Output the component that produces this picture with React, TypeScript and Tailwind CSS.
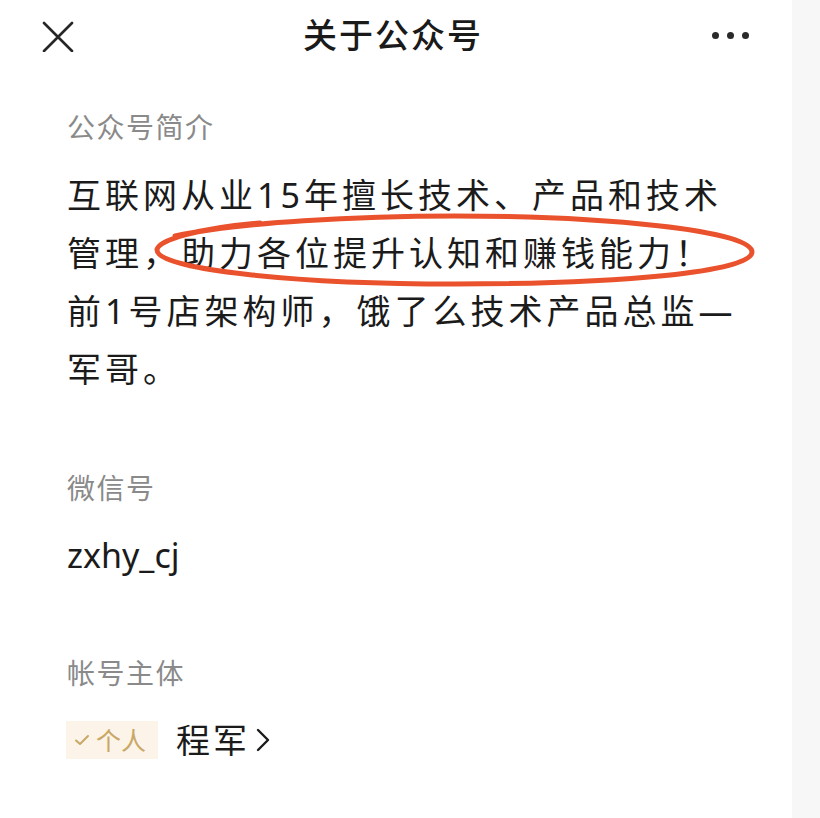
import React from "react";

const font = { fontFamily: '"Noto Sans", "Noto Sans CJK SC", sans-serif' };

const App = () => {
  return (
    <div className="flex w-[820px] h-[818px] bg-white overflow-hidden" style={font}>
      <div className="relative w-[792px] h-full bg-white">
        {/* header */}
        <div className="flex items-center justify-between h-[70px] pl-[42px] pr-[42px]">
          <svg width="32" height="32" viewBox="0 0 32 32" className="mt-[1px]">
            <path d="M2 3 L30 31 M30 3 L2 31" stroke="#262626" strokeWidth="2.6" strokeLinecap="round" />
          </svg>
          <div className="text-[34px] font-medium tracking-[2px] text-[#1a1a1a] leading-none">关于公众号</div>
          <div className="flex items-center gap-[8px] w-[38px]">
            <span className="w-[7px] h-[7px] rounded-full bg-[#2a2a2a]" />
            <span className="w-[7px] h-[7px] rounded-full bg-[#2a2a2a]" />
            <span className="w-[7px] h-[7px] rounded-full bg-[#2a2a2a]" />
          </div>
        </div>

        <div className="pl-[67px]">
          <div className="mt-[37px] h-[40px] leading-[40px] text-[28px] tracking-[1.5px] text-[#8a8a8a]">公众号简介</div>

          <div className="mt-[19px] text-[34px] leading-[58px] tracking-[4px] text-[#1b1b1b] whitespace-nowrap">
            <div>互联网从业15年擅长技术、产品和技术</div>
            <div>管理，助力各位提升认知和赚钱能力！</div>
            <div>前1号店架构师，饿了么技术产品总监—</div>
            <div>军哥。</div>
          </div>

          <div className="mt-[70px] h-[40px] leading-[40px] text-[28px] tracking-[1.5px] text-[#8a8a8a]">微信号</div>
          <div className="mt-[18px] h-[58px] leading-[58px] text-[34px] text-[#1b1b1b]">zxhy_cj</div>

          <div className="mt-[69px] h-[40px] leading-[40px] text-[28px] tracking-[1.5px] text-[#8a8a8a]">帐号主体</div>
          <div className="mt-[18px] h-[58px] flex items-center gap-[18px]">
            <div className="flex items-center h-[38px] w-[92px] bg-[#fcf4e8] pl-[8px] gap-[6px] -ml-[1px]">
              <svg width="16" height="12" viewBox="0 0 16 12">
                <path d="M2 6.5 L6 10 L14 2" fill="none" stroke="#c9a766" strokeWidth="2" strokeLinecap="round" strokeLinejoin="round" />
              </svg>
              <span className="text-[25px] leading-none text-[#c9a766]">个人</span>
            </div>
            <div className="flex items-center gap-[6px]">
              <span className="text-[34px] leading-none tracking-[3px] text-[#1b1b1b]">程军</span>
              <svg width="14" height="24" viewBox="0 0 14 24">
                <path d="M2 2 L12 12 L2 22" fill="none" stroke="#1b1b1b" strokeWidth="2.4" strokeLinecap="round" strokeLinejoin="round" />
              </svg>
            </div>
          </div>
        </div>

        {/* hand-drawn highlight */}
        <svg className="absolute left-0 top-0 pointer-events-none" width="792" height="818" viewBox="0 0 792 818">
          <path
            d="M175 236 C 240 222, 360 216, 455 216 C 600 216, 752 230, 752 252 C 752 272, 620 284, 455 284 C 300 284, 157 270, 157 250 C 157 240, 200 228, 260 223"
            fill="none"
            stroke="#e9522c"
            strokeWidth="5"
            strokeLinecap="round"
          />
        </svg>
      </div>
      <div className="flex-1 bg-[#f7f7f7]" />
    </div>
  );
};

export default App;
